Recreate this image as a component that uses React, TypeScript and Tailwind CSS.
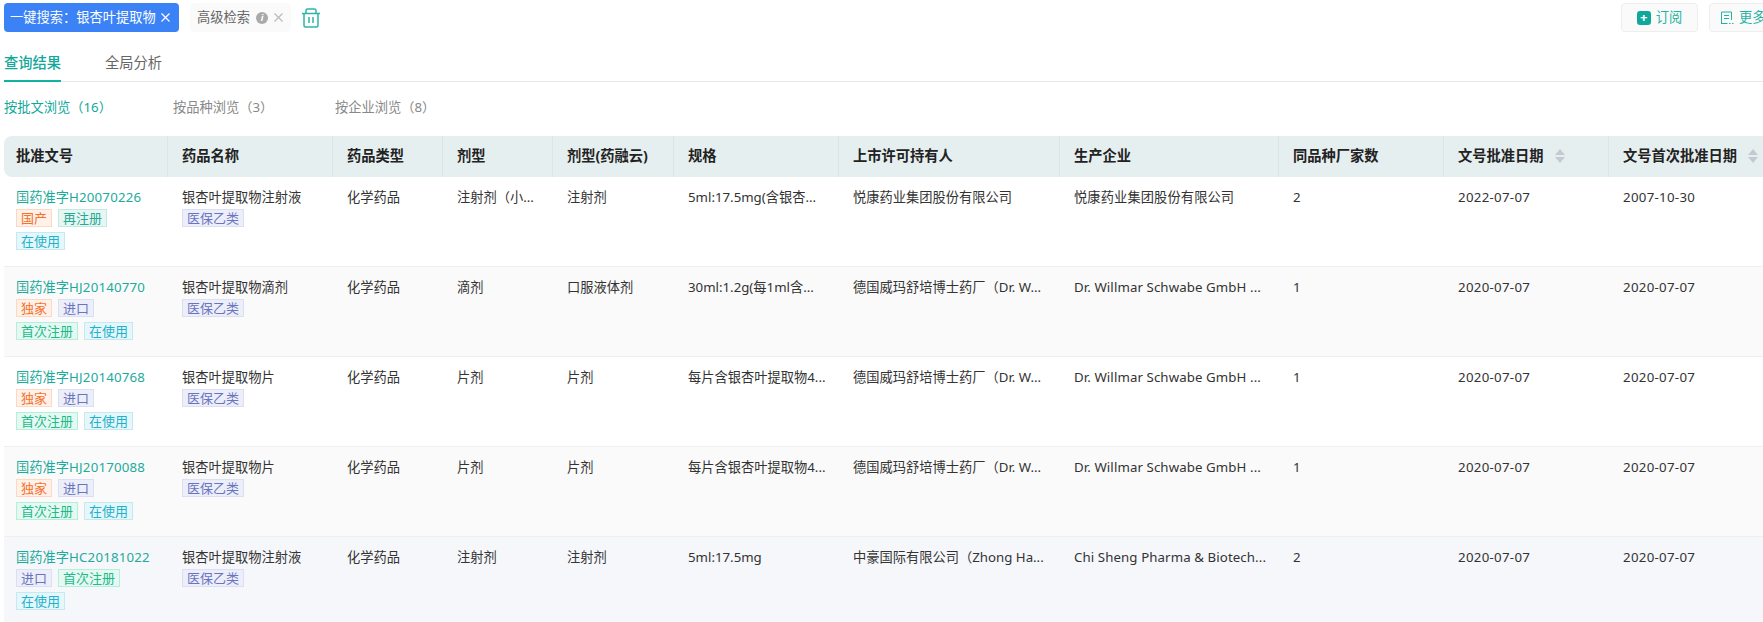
type TagKind = "orange" | "teal" | "indigo" | "green" | "cyan"

interface Row {
  prefix: string
  code: string
  tags: [string, TagKind][][]
  name: string
  form: string
  formYrl: string
  spec: string
  holder: string
  maker: string
  count: string
  date: string
  firstDate: string
  bg: string
}

const tagStyles: Record<TagKind, string> = {
  orange: "bg-[#fff0e8] border-[#ffd8c4] text-[#f5722d]",
  teal: "bg-[#e6f6f3] border-[#c2e9e2] text-[#27a994]",
  indigo: "bg-[#eceef9] border-[#dcdff2] text-[#6a73c0]",
  green: "bg-[#e5f9f2] border-[#b5eedb] text-[#1dba8c]",
  cyan: "bg-[#e5f7fb] border-[#c4e9f1] text-[#1fb2cc]",
}

const columns = [
  { title: "批准文号", width: "w-[164px]", pad: "pl-[12px]" },
  { title: "药品名称", width: "w-[165px]", pad: "pl-[14px]" },
  { title: "药品类型", width: "w-[110px]", pad: "pl-[14px]" },
  { title: "剂型", width: "w-[110px]", pad: "pl-[14px]" },
  { title: "剂型(药融云)", width: "w-[121px]", pad: "pl-[14px]" },
  { title: "规格", width: "w-[165px]", pad: "pl-[14px]" },
  { title: "上市许可持有人", width: "w-[221px]", pad: "pl-[14px]" },
  { title: "生产企业", width: "w-[219px]", pad: "pl-[14px]" },
  { title: "同品种厂家数", width: "w-[165px]", pad: "pl-[14px]" },
  { title: "文号批准日期", width: "w-[165px]", pad: "pl-[14px]", sort: true },
  { title: "文号首次批准日期", width: "w-[165px]", pad: "pl-[14px]", sort: true },
]

const rows: Row[] = [
  {
    prefix: "国药准字",
    code: "H20070226",
    tags: [[["国产", "orange"], ["再注册", "teal"]], [["在使用", "cyan"]]],
    name: "银杏叶提取物注射液",
    form: "注射剂（小...",
    formYrl: "注射剂",
    spec: "5ml:17.5mg(含银杏...",
    holder: "悦康药业集团股份有限公司",
    maker: "悦康药业集团股份有限公司",
    count: "2",
    date: "2022-07-07",
    firstDate: "2007-10-30",
    bg: "bg-white",
  },
  {
    prefix: "国药准字",
    code: "HJ20140770",
    tags: [[["独家", "orange"], ["进口", "indigo"]], [["首次注册", "green"], ["在使用", "cyan"]]],
    name: "银杏叶提取物滴剂",
    form: "滴剂",
    formYrl: "口服液体剂",
    spec: "30ml:1.2g(每1ml含...",
    holder: "德国威玛舒培博士药厂（Dr. W...",
    maker: "Dr. Willmar Schwabe GmbH ...",
    count: "1",
    date: "2020-07-07",
    firstDate: "2020-07-07",
    bg: "bg-[#fafafa]",
  },
  {
    prefix: "国药准字",
    code: "HJ20140768",
    tags: [[["独家", "orange"], ["进口", "indigo"]], [["首次注册", "green"], ["在使用", "cyan"]]],
    name: "银杏叶提取物片",
    form: "片剂",
    formYrl: "片剂",
    spec: "每片含银杏叶提取物4...",
    holder: "德国威玛舒培博士药厂（Dr. W...",
    maker: "Dr. Willmar Schwabe GmbH ...",
    count: "1",
    date: "2020-07-07",
    firstDate: "2020-07-07",
    bg: "bg-white",
  },
  {
    prefix: "国药准字",
    code: "HJ20170088",
    tags: [[["独家", "orange"], ["进口", "indigo"]], [["首次注册", "green"], ["在使用", "cyan"]]],
    name: "银杏叶提取物片",
    form: "片剂",
    formYrl: "片剂",
    spec: "每片含银杏叶提取物4...",
    holder: "德国威玛舒培博士药厂（Dr. W...",
    maker: "Dr. Willmar Schwabe GmbH ...",
    count: "1",
    date: "2020-07-07",
    firstDate: "2020-07-07",
    bg: "bg-[#fafafa]",
  },
  {
    prefix: "国药准字",
    code: "HC20181022",
    tags: [[["进口", "indigo"], ["首次注册", "green"]], [["在使用", "cyan"]]],
    name: "银杏叶提取物注射液",
    form: "注射剂",
    formYrl: "注射剂",
    spec: "5ml:17.5mg",
    holder: "中豪国际有限公司（Zhong Ha...",
    maker: "Chi Sheng Pharma & Biotech...",
    count: "2",
    date: "2020-07-07",
    firstDate: "2020-07-07",
    bg: "bg-[#f6f7fb]",
  },
]

const Tag = ({ label, kind }: { label: string; kind: TagKind }) => (
  <span className={`inline-flex h-[18px] items-center border px-[4px] text-[13px] leading-none ${tagStyles[kind]}`}>
    {label}
  </span>
)

const SortIcon = () => (
  <span className="ml-[11px] inline-flex flex-col gap-[2px]">
    <svg width="10" height="6" viewBox="0 0 10 6"><path d="M5 0l5 6H0z" fill="#c3cad1" /></svg>
    <svg width="10" height="6" viewBox="0 0 10 6"><path d="M0 0h10L5 6z" fill="#c3cad1" /></svg>
  </span>
)

const CloseIcon = ({ color }: { color: string }) => (
  <svg width="9" height="9" viewBox="0 0 9 9" fill="none" stroke={color} strokeWidth="1.2">
    <path d="M.5.5l8 8M8.500.5l-8 8" />
  </svg>
)

const TrashIcon = () => (
  <svg width="18" height="20" viewBox="0 0 18 20" fill="none" stroke="#2bb5a8" strokeWidth="1.5">
    <path d="M0 5.500h18" />
    <path d="M4 5.500V2.600Q4 1 5.600 1h6.800Q14 1 14 2.600v2.900" />
    <path d="M2 5.500v12Q2 19 3.500 19h11q1.500 0 1.500-1.500v-12" />
    <path d="M7 9v6M11 9v6" />
  </svg>
)

export default function App() {
  return (
    <div
      className="h-[622px] w-[1763px] overflow-hidden bg-white pl-[4px] text-[13.25px] text-[#333]"
      style={{ fontFamily: '"Noto Sans", "Noto Sans CJK SC", sans-serif' }}
    >
      {/* Search conditions */}
      <div className="flex h-[35px] w-[1792px] items-start pt-[3px]">
        <div className="flex h-[29px] w-[175px] items-center rounded-[4px] bg-[#3b82f6] pl-[6px] text-white">
          <span className="whitespace-nowrap">一键搜索：银杏叶提取物</span>
          <span className="ml-[5px]"><CloseIcon color="#ffffff" /></span>
        </div>
        <div className="ml-[11px] flex h-[29px] w-[101px] items-center rounded-[4px] bg-[#fafafa] pl-[7px] text-[#666]">
          <span className="whitespace-nowrap">高级检索</span>
          <span className="ml-[6px] flex h-[12px] w-[12px] items-center justify-center rounded-full bg-[#aaa] text-[9px] font-bold italic leading-none text-white">i</span>
          <span className="ml-[6px]"><CloseIcon color="#bbbbbb" /></span>
        </div>
        <div className="ml-[11px] mt-[5px]">
          <TrashIcon />
        </div>
        <div className="ml-auto flex gap-[11px]">
          <button className="flex h-[29px] w-[77px] items-center justify-center gap-[5px] rounded-[4px] border border-[#eee] bg-[#fafafa] text-[#1fb3a4]">
            <span className="flex h-[14px] w-[14px] items-center justify-center rounded-[3px] bg-[#10a89a] text-[13px] font-bold leading-none text-white">+</span>
            订阅
          </button>
          <button className="flex h-[29px] w-[87px] items-center gap-[5px] rounded-[4px] border border-[#eee] bg-[#fafafa] pl-[10px] text-[#1fb3a4]">
            <svg width="14" height="14" viewBox="0 0 14 14" fill="none" stroke="#1fb3a4" strokeWidth="1">
              <path d="M1.500 13V1h10v8M4 4.500h5M4 7.500h5M1.500 12.500h6M9 12.500h1.500M12 12.500h1.500" />
            </svg>
            <span className="whitespace-nowrap">更多操作</span>
          </button>
        </div>
      </div>

      {/* Tabs */}
      <div className="flex h-[47px] gap-[44px] border-b border-[#e8e8e8] text-[14.25px]">
        <div className="h-[47px] border-b-2 border-[#10b3a1] pt-[17px] font-medium leading-[22px] text-[#10a89a]">查询结果</div>
        <div className="pt-[17px] leading-[22px] text-[#666]">全局分析</div>
      </div>

      {/* View switches */}
      <div className="flex h-[54px] items-center pb-[2px] leading-none text-[#888]">
        <span className="w-[169px] text-[#10a89a]">按批文浏览（16）</span>
        <span className="w-[162px]">按品种浏览（3）</span>
        <span>按企业浏览（8）</span>
      </div>

      <table className="w-[1770px] table-fixed border-separate border-spacing-0">
        <colgroup>
          {columns.map((col) => (
            <col key={col.title} className={col.width} />
          ))}
        </colgroup>
        <thead>
          <tr className="h-[41px] bg-[#e6eff0] text-left text-[14.25px]">
            {columns.map((col, i) => (
              <th
                key={col.title}
                className={`${col.pad} whitespace-nowrap border-[#d8e6e6] p-0 pb-[2px] font-bold text-[#222] ${i < columns.length - 1 ? "border-r" : ""} ${i === 0 ? "rounded-l-[8px]" : ""}`}
              >
                <span className="inline-flex items-center">
                  {col.title}
                  {col.sort && <SortIcon />}
                </span>
              </th>
            ))}
          </tr>
        </thead>
        <tbody>
          {rows.map((row) => (
            <tr key={row.code} className={`h-[90px] align-top ${row.bg}`}>
              <td className="border-b border-[#eeeef4] pl-[12px] pt-[10px]">
                <div className="whitespace-nowrap leading-[20px] text-[#1dab9c]">
                  {row.prefix}
                  <span className="tracking-[0.2px]">{row.code}</span>
                </div>
                <div className="mt-[2px] flex flex-col gap-[5px]">
                  {row.tags.map((group, i) => (
                    <div key={i} className="flex gap-[6px]">
                      {group.map(([label, kind]) => (
                        <Tag key={label} label={label} kind={kind} />
                      ))}
                    </div>
                  ))}
                </div>
              </td>
              <td className="border-b border-[#eeeef4] pl-[14px] pt-[10px]">
                <div className="whitespace-nowrap leading-[20px]">{row.name}</div>
                <div className="mt-[2px] flex">
                  <Tag label="医保乙类" kind="indigo" />
                </div>
              </td>
              {["化学药品", row.form, row.formYrl, row.spec, row.holder].map((value, i) => (
                <td key={i} className="whitespace-nowrap border-b border-[#eeeef4] pl-[14px] pt-[10px] leading-[20px]">
                  {value}
                </td>
              ))}
              <td className="whitespace-nowrap border-b border-[#eeeef4] pl-[14px] pt-[10px] leading-[20px] tracking-[0.1px]">{row.maker}</td>
              {[row.count, row.date, row.firstDate].map((value, i) => (
                <td key={i} className="whitespace-nowrap border-b border-[#eeeef4] pl-[14px] pt-[10px] leading-[20px] tracking-[0.3px]">
                  {value}
                </td>
              ))}
            </tr>
          ))}
        </tbody>
      </table>
    </div>
  )
}
